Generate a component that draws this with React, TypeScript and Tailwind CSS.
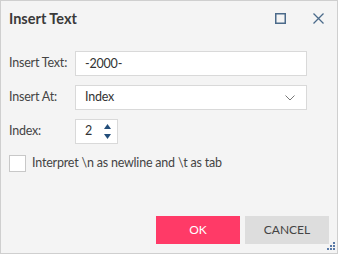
import React, { useState } from 'react';

const App: React.FC = () => {
  const [text, setText] = useState('-2000-');
  const [index, setIndex] = useState(2);
  const [interpret, setInterpret] = useState(false);

  return (
    <div className="w-[338px] h-[254px] border border-[#cfcfcf] bg-[#f4f4f4] flex flex-col text-[12.5px] tracking-[-0.2px] text-[#444] font-['Lato',sans-serif]">
      {/* Title bar */}
      <div className="h-[35px] flex items-center pl-2 pr-[13px]">
        <h1 className="text-[14.5px] tracking-normal font-bold text-[#3a3a3a] pt-[1px]">Insert Text</h1>
        <div className="ml-auto flex items-center gap-[27px]">
          <svg width="11" height="11" viewBox="0 0 11 11" className="text-[#4b6a8a]">
            <rect x="0.75" y="0.75" width="9.5" height="9.5" fill="none" stroke="currentColor" strokeWidth="1.5" />
          </svg>
          <svg width="11" height="11" viewBox="0 0 11 11" className="text-[#4b6a8a]">
            <path d="M0.5 0.5 L10.5 10.5 M10.5 0.5 L0.5 10.5" stroke="currentColor" strokeWidth="1.3" />
          </svg>
        </div>
      </div>

      {/* Form */}
      <div className="flex flex-col pl-2 pr-[30px] pt-[15px]">
        <div className="flex items-center h-[25px]">
          <label className="w-[66px] shrink-0 whitespace-nowrap">Insert Text:</label>
          <input
            value={text}
            onChange={(e) => setText(e.target.value)}
            className="flex-1 min-w-0 h-[25px] bg-white border border-[#d9d9d9] px-[9px] outline-none text-[#333]"
          />
        </div>
        <div className="flex items-center h-[25px] mt-[9px]">
          <label className="w-[66px] shrink-0 whitespace-nowrap">Insert At:</label>
          <div className="flex-1 h-[25px] bg-white border border-[#d9d9d9] pl-[9px] pr-[11px] flex items-center text-[#333]">
            <span>Index</span>
            <svg width="10" height="6" viewBox="0 0 10 6" className="ml-auto text-[#777]">
              <path d="M0.5 0.5 L5 5 L9.5 0.5" fill="none" stroke="currentColor" strokeWidth="1" />
            </svg>
          </div>
        </div>
        <div className="flex items-center h-[25px] mt-[9px]">
          <label className="w-[66px] shrink-0 whitespace-nowrap">Index:</label>
          <div className="w-[43px] h-[25px] bg-white border border-[#d9d9d9] flex items-center pl-[9px] pr-[6px] text-[#333]">
            <span>{index}</span>
            <div className="ml-auto flex flex-col gap-[5px]">
              <button onClick={() => setIndex(index + 1)} className="block">
                <svg width="7" height="5" viewBox="0 0 7 5" className="text-[#234e7a]">
                  <path d="M3.5 0 L7 5 L0 5 Z" fill="currentColor" />
                </svg>
              </button>
              <button onClick={() => setIndex(Math.max(0, index - 1))} className="block">
                <svg width="7" height="5" viewBox="0 0 7 5" className="text-[#234e7a]">
                  <path d="M0 0 L7 0 L3.5 5 Z" fill="currentColor" />
                </svg>
              </button>
            </div>
          </div>
        </div>
        <label className="flex items-center mt-[10px] gap-[6px]">
          <input
            type="checkbox"
            checked={interpret}
            onChange={(e) => setInterpret(e.target.checked)}
            className="appearance-none w-[17px] h-[17px] bg-white border border-[#c8c8c8]"
          />
          <span>Interpret \n as newline and \t as tab</span>
        </label>
      </div>

      {/* Footer */}
      <div className="mt-auto flex justify-end gap-[5px] pr-2 pb-[9px] relative">
        <button className="w-[84px] h-[28px] bg-[#ff3a67] text-white text-[12px] tracking-normal">OK</button>
        <button className="w-[84px] h-[28px] bg-[#dddddd] text-[#444] text-[12px] tracking-normal">CANCEL</button>
        <svg width="9" height="9" viewBox="0 0 9 9" className="absolute right-[2px] bottom-[2px] text-[#5a7aa8]">
          <rect x="7" y="0" width="2" height="2" fill="currentColor" />
          <rect x="4" y="3" width="2" height="2" fill="currentColor" />
          <rect x="7" y="3" width="2" height="2" fill="currentColor" />
          <rect x="1" y="6" width="2" height="2" fill="currentColor" />
          <rect x="4" y="6" width="2" height="2" fill="currentColor" />
          <rect x="7" y="6" width="2" height="2" fill="currentColor" />
        </svg>
      </div>
    </div>
  );
};

export default App;
